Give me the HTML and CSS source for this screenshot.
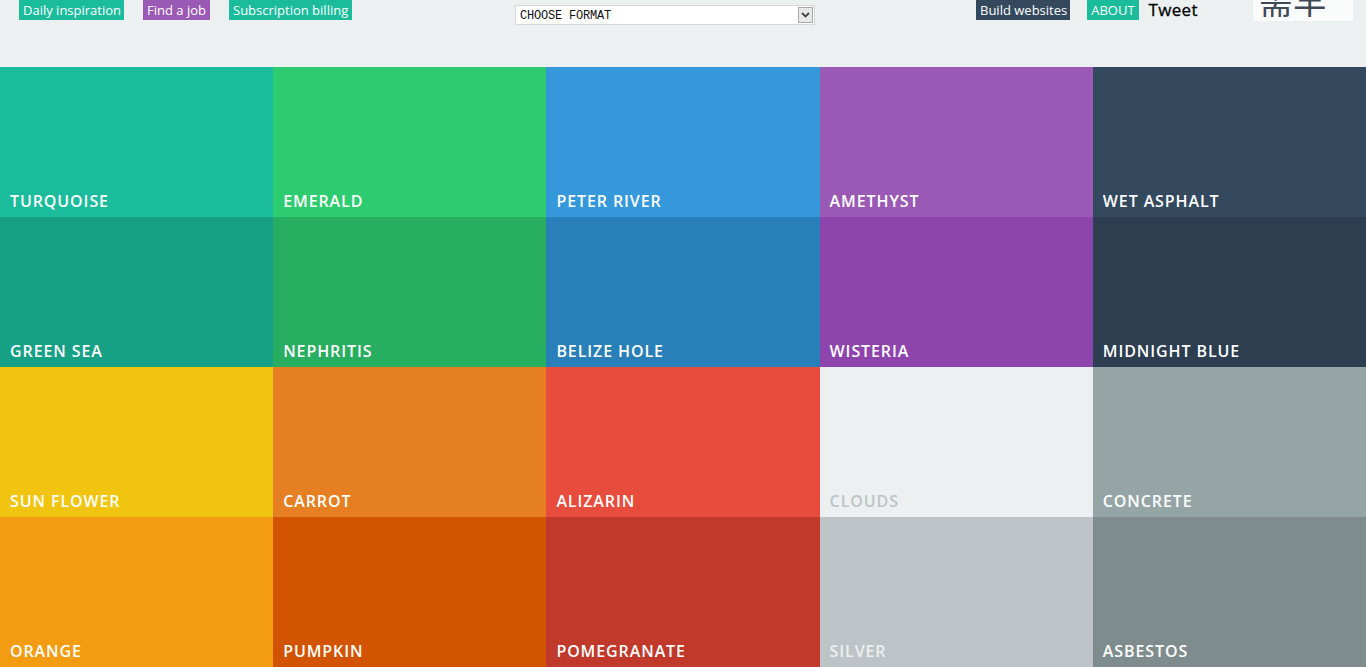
FILE: index.html
```html
<!DOCTYPE html>
<html>
<head>
<meta charset="utf-8">
<link rel="stylesheet" href="styles.css">
</head>
<body>
<header class="top">
  <nav class="left-links">
    <a class="tag tag-green">Daily inspiration</a>
    <a class="tag tag-purple">Find a job</a>
    <a class="tag tag-green">Subscription billing</a>
  </nav>
  <div class="format">
    <span class="format-label">CHOOSE FORMAT</span>
    <span class="format-btn"><svg width="9" height="6" viewBox="0 0 9 6"><path d="M1 1 L4.5 4.5 L8 1" fill="none" stroke="#444" stroke-width="1.8"/></svg></span>
  </div>
  <nav class="right-links">
    <a class="tag tag-dark">Build websites</a>
    <a class="tag tag-green">ABOUT</a>
    <span class="tweet">Tweet</span>
    <span class="share"><span class="share-text">需罕</span></span>
  </nav>
</header>
<main class="grid">
  <div class="tile c1"><span>TURQUOISE</span></div>
  <div class="tile c2"><span>EMERALD</span></div>
  <div class="tile c3"><span>PETER RIVER</span></div>
  <div class="tile c4"><span>AMETHYST</span></div>
  <div class="tile c5"><span>WET ASPHALT</span></div>
  <div class="tile c6"><span>GREEN SEA</span></div>
  <div class="tile c7"><span>NEPHRITIS</span></div>
  <div class="tile c8"><span>BELIZE HOLE</span></div>
  <div class="tile c9"><span>WISTERIA</span></div>
  <div class="tile c10"><span>MIDNIGHT BLUE</span></div>
  <div class="tile c11"><span>SUN FLOWER</span></div>
  <div class="tile c12"><span>CARROT</span></div>
  <div class="tile c13"><span>ALIZARIN</span></div>
  <div class="tile c14"><span>CLOUDS</span></div>
  <div class="tile c15"><span>CONCRETE</span></div>
  <div class="tile c16"><span>ORANGE</span></div>
  <div class="tile c17"><span>PUMPKIN</span></div>
  <div class="tile c18"><span>POMEGRANATE</span></div>
  <div class="tile c19"><span>SILVER</span></div>
  <div class="tile c20"><span>ASBESTOS</span></div>
</main>
</body>
</html>
```
FILE: styles.css
```css
html, body {
  margin: 0;
  padding: 0;
  overflow: hidden;
  background: #ecf0f1;
  font-family: "Open Sans", "Noto Sans", sans-serif;
}
.top {
  height: 67px;
  display: flex;
  align-items: flex-start;
  background: #ecf0f1;
}
.left-links {
  display: flex;
  gap: 19px;
  margin-left: 19px;
  width: 496px;
}
.tag {
  display: block;
  height: 20px;
  line-height: 20px;
  padding: 0 4px;
  font-size: 13px;
  color: #fff;
  text-decoration: none;
  white-space: nowrap;
  letter-spacing: 0;
}
.left-links .tag:first-child { padding-right: 3px; }
.tag-green { background: #1abc9c; }
.tag-purple { background: #9b59b6; }
.tag-dark { background: #34495e; }
.format {
  margin-top: 5px;
  width: 298px;
  height: 18px;
  border: 1px solid #d6d9da;
  background: #fff;
  display: flex;
  align-items: center;
  justify-content: space-between;
}
.format-label {
  font-family: "Liberation Mono", monospace;
  font-size: 12px;
  color: #111;
  padding-left: 4px;
  letter-spacing: -0.2px;
  padding-top: 1px;
}
.format-btn {
  width: 15px;
  height: 16px;
  margin-right: 1px;
  border: 1px solid #a9a9a9;
  background: #e8e8e8;
  box-sizing: border-box;
  display: flex;
  align-items: center;
  justify-content: center;
}
.right-links {
  display: flex;
  margin-left: 161px;
  align-items: flex-start;
}
.right-links .tag-dark { padding-right: 3px; }
.right-links .tag-green { margin-left: 17px; padding: 0 4px; }
.tweet {
  margin-left: 10px;
  font-size: 17px;
  font-weight: 500;
  color: #000;
  line-height: 20px;
  letter-spacing: 0.3px;
  -webkit-text-stroke: 0.3px #000;
}
.share {
  margin-left: 55px;
  width: 100px;
  height: 21px;
  background: #fafbfb;
  overflow: hidden;
  position: relative;
}
.share-text {
  position: absolute;
  left: 6px;
  top: -20px;
  font-family: "Noto Sans CJK SC", sans-serif;
  font-size: 34px;
  line-height: 40px;
  color: #3e4a55;
  white-space: nowrap;
}
.grid {
  display: grid;
  grid-template-columns: repeat(5, 1fr);
  grid-auto-rows: 150px;
}
.tile {
  display: flex;
  align-items: flex-end;
  padding: 0 10px 5px;
  color: #fff;
  font-size: 16px;
  font-weight: 600;
  letter-spacing: 0.9px;
}
.c1 { background: #1abc9c; }
.c2 { background: #2ecc71; }
.c3 { background: #3498db; }
.c4 { background: #9b59b6; }
.c5 { background: #34495e; }
.c6 { background: #16a085; }
.c7 { background: #27ae60; }
.c8 { background: #2980b9; }
.c9 { background: #8e44ad; }
.c10 { background: #2c3e50; }
.c11 { background: #f1c40f; }
.c12 { background: #e67e22; }
.c13 { background: #e74c3c; }
.c14 { background: #ecf0f1; color: #bdc3c7; }
.c15 { background: #95a5a6; }
.c16 { background: #f39c12; }
.c17 { background: #d35400; }
.c18 { background: #c0392b; }
.c19 { background: #bdc3c7; color: #ecf0f1; }
.c20 { background: #7f8c8d; }
```
